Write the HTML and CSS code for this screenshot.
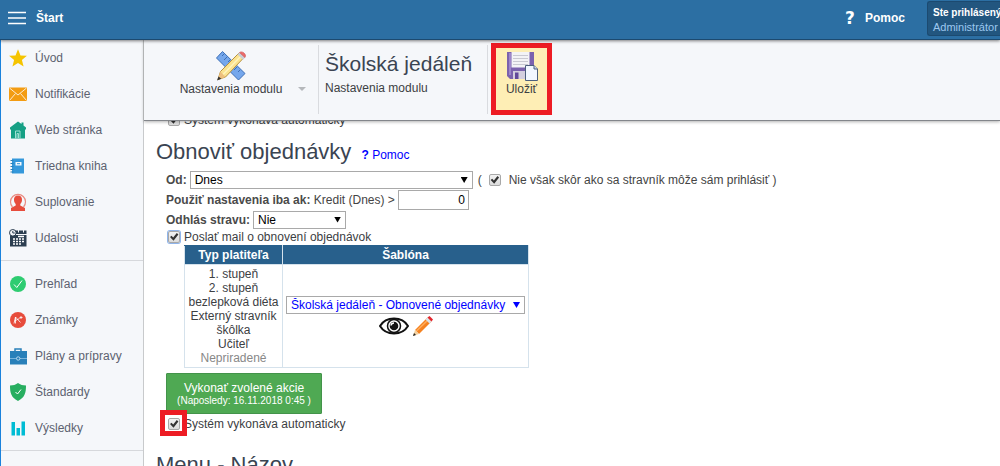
FILE: index.html
```html
<!DOCTYPE html>
<html lang="sk">
<head>
<meta charset="utf-8">
<title>Školská jedáleň</title>
<link rel="stylesheet" href="styles.css">
</head>
<body>
<header class="topbar">
  <button class="menu-button" type="button">
    <svg width="18" height="14" viewBox="0 0 18 14"><path d="M0 1.500h18M0 7h18M0 12.500h18" stroke="#fff" stroke-width="1.600"/></svg>
    Štart
  </button>
  <a class="help" href="#"><span class="help-mark">?</span>Pomoc</a>
  <div class="user"><strong>Ste prihlásený</strong><span>Administrátor</span></div>
</header>
<div class="shell">
  <nav class="sidebar">
    <div class="nav-group">
      <a class="nav-item" href="#"><svg class="nav-icon" viewBox="0 0 18 18"><path d="M9 .3l2.500 6.100 6.400.4-5 4.200 1.700 6.500L9 14l-5.600 3.500 1.700-6.500-5-4.200 6.400-.4z" fill="#f5c400"/></svg>Úvod</a>
      <a class="nav-item" href="#"><svg class="nav-icon" viewBox="0 0 18 18"><path d="M0 2.500h18v13.500H0z" fill="#f39c12"/><path d="M.5 3l8.500 7 8.500-7M.5 15.500l6-7M17.500 15.500l-6-7" fill="none" stroke="#fdebd0"/></svg>Notifikácie</a>
      <a class="nav-item" href="#"><svg class="nav-icon" viewBox="0 0 18 18"><path d="M9 .5L1 6.500v2h1V17.500h14V8.500h1v-2L14.500 4.500V1.500h-2v1.500z" fill="#16a085"/><path d="M6.500 17.500V10h4.500v7.500M8 17v-4.500h1.500V17" fill="none" stroke="#9fe0d2"/></svg>Web stránka</a>
      <a class="nav-item" href="#"><svg class="nav-icon" viewBox="0 0 18 18"><path d="M3 1.500h12v15H3z" fill="#3498db"/><path d="M1.500 3.500h3M1.500 6.500h3M1.500 9.500h3M1.500 12.500h3M1.500 15h3" stroke="#2980b9"/><path d="M6.500 5h6v3.500h-6z" fill="#f4f9fd"/><path d="M8 6.700h3" stroke="#3498db"/></svg>Triedna kniha</a>
      <a class="nav-item" href="#"><svg class="nav-icon" viewBox="0 0 18 18"><path d="M3.500 14a7.500 7.500 0 1 1 11 0" fill="none" stroke="#e98b82" stroke-width="1.200"/><path d="M9 2.500c-2.800 0-4.200 1.800-4 4.500 0 1.800.8 3 1.700 4v1.500L2 15v3h14v-3l-4.700-2.500V11c.9-1 1.700-2.200 1.700-4 .2-2.700-1.200-4.500-4-4.500z" fill="#e74c3c"/></svg>Suplovanie</a>
      <a class="nav-item" href="#"><svg class="nav-icon" viewBox="0 0 18 18"><path d="M5 1.500h12.500V5H5zM1 6h16.500v11.500H1z" fill="#2c3e50"/><path d="M9.500 0v3.500M14.500 0v3.500" stroke="#f5f7fa"/><circle cx="3.800" cy="3.800" r="3.300" fill="#f5f7fa" stroke="#2c3e50"/><path d="M3.800 2v2h2" fill="none" stroke="#2c3e50"/><path d="M4 10h2M7 10h2M10 10h2M13 10h2M4 12.500h2M7 12.500h2M10 12.500h2M13 12.500h2M4 15h2M7 15h2M10 15h2M9 7.500h6" stroke="#fff" stroke-width="1.500"/></svg>Udalosti</a>
    </div>
    <div class="nav-group">
      <a class="nav-item" href="#"><svg class="nav-icon" viewBox="0 0 18 18"><circle cx="9" cy="9" r="8" fill="#2ecc71"/><path d="M5 9.500l2.800 3L13 5.500" fill="none" stroke="#fff"/></svg>Prehľad</a>
      <a class="nav-item" href="#"><svg class="nav-icon" viewBox="0 0 18 18"><circle cx="9" cy="9" r="8" fill="#e74c3c"/><path d="M5 12.500L6.500 6l5 5.500M5.500 10l5-2.500M6.500 12.500V6M10.500 6.500h3M12 5v3" fill="none" stroke="#fff" stroke-width=".8"/></svg>Známky</a>
      <a class="nav-item" href="#"><svg class="nav-icon" viewBox="0 0 18 18"><path d="M1 4h17v13.500H1z" fill="#2980b9"/><path d="M6 4V2h6v2" fill="none" stroke="#2980b9" stroke-width="1.500"/><path d="M1 11.500h6.500M11 11.500h7" stroke="#8fc1e3" stroke-width=".8"/><circle cx="9.200" cy="11.500" r="1.700" fill="#2980b9" stroke="#d6e9f6" stroke-width=".8"/></svg>Plány a prípravy</a>
      <a class="nav-item" href="#"><svg class="nav-icon" viewBox="0 0 18 18"><path d="M9 0c2 1.700 5 2.500 8 2.500 0 7-1 12-8 15.500C2 14.500 1 9.500 1 2.500 4 2.500 7 1.700 9 0z" fill="#27ae60"/><path d="M6.500 9l2 2L12 6.500" fill="none" stroke="#fff"/></svg>Štandardy</a>
      <a class="nav-item" href="#"><svg class="nav-icon" viewBox="0 0 18 18"><path d="M2.500 3h3.500v13.500H2.500zM7.500 9h3.500v7.500H7.500zM12.500 2.500H16v14h-3.500z" fill="#00bcd4"/></svg>Výsledky</a>
    </div>
  </nav>
  <main class="main">
    <div class="toolbar">
      <button class="tool settings" type="button">
        <svg class="tool-icon" viewBox="0 0 32 32"><path d="M7.500 1.500L1.500 8l22 22 6.500-6.500z" fill="#75a7ec" stroke="#3d6fb6"/><path d="M9 4l-2 2M12 7l-3 3M15 10l-2 2M19 14l-2 2M22 17l-3 3M25 20l-2 2" stroke="#3d6fb6"/><path d="M3 29.500l2.500-8L24 3l5 4.500L10.500 27z" fill="#fbe38f" stroke="#b7913e"/><path d="M8 24.500L26.500 5.500" stroke="#fff3bd" stroke-width="1.500"/><path d="M22.500 4.500l2-2L30 7.800l-2 2z" fill="#c9ced6"/><path d="M24.500 2.500C27 .5 32 4 30 7.500z" fill="#ed6b6b" stroke="#c84a4a" stroke-width=".6"/><path d="M5.500 21.500l-3 8.500 8-3z" fill="#eec07e"/><path d="M3.500 26.500L2 30.500l4.300-1.700z" fill="#333"/></svg>
        <span>Nastavenia modulu</span>
        <svg class="tool-arrow" viewBox="0 0 8 4"><path d="M0 0h8L4 4z" fill="#b5b8bb"/></svg>
      </button>
      <div class="module">
        <h1>Školská jedáleň</h1>
        <p>Nastavenia modulu</p>
      </div>
      <button class="tool save" type="button">
        <svg class="tool-icon" viewBox="0 0 32 32"><path d="M1 2h27v27H4l-3-3z" fill="#7b62ae"/><path d="M3 3h2v22H3z" fill="#9d86ca"/><path d="M5.500 2h18v15.500h-18z" fill="#f3f3f6"/><path d="M7 5.500h15M7 8.500h15M7 11.500h15M7 14.500h15" stroke="#c9c9d2"/><path d="M7 21h13v8H7z" fill="#d4cfdf"/><path d="M9 22.500h3.500V29H9z" fill="#62499a"/><path d="M19.500 15.500H28l3.500 3.500v11.500h-12z" fill="#f2f7ff" stroke="#4c5f7e"/><path d="M28 15.500V19h3.500" fill="#c9daf2" stroke="#4c5f7e"/></svg>
        <span>Uložiť</span>
      </button>
    </div>
    <form class="content">
      <label class="check-row"><input class="check" type="checkbox" checked>Systém vykonáva automaticky</label>
      <h2>Obnoviť objednávky <a class="inline-help" href="#"><b>?</b> Pomoc</a></h2>
      <div class="row">
        <label class="name" for="from">Od:</label>
        <span class="select select-from"><select id="from"><option>Dnes</option></select></span>
        <span class="paren">(</span>
        <label class="limit"><input class="check" type="checkbox" checked>Nie však skôr ako sa stravník môže sám prihlásiť )</label>
      </div>
      <div class="row">
        <label for="credit"><b>Použiť nastavenia iba ak:</b> Kredit (Dnes) &gt;</label>
        <input class="credit" id="credit" type="text" value="0">
      </div>
      <div class="row row-cancel">
        <label class="name" for="cancel">Odhlás stravu:</label>
        <span class="select select-cancel"><select id="cancel"><option>Nie</option></select></span>
      </div>
      <label class="check-row mail-row"><input class="check focused" type="checkbox" checked>Poslať mail o obnovení objednávok</label>
      <table class="templates">
        <thead><tr><th class="col-type">Typ platiteľa</th><th class="col-template">Šablóna</th></tr></thead>
        <tbody><tr>
          <td>1. stupeň<br>2. stupeň<br>bezlepková diéta<br>Externý stravník<br>škôlka<br>Učiteľ<br><span class="muted">Nepriradené</span></td>
          <td>
            <span class="select select-template"><select aria-label="Šablóna"><option>Školská jedáleň - Obnovené objednávky</option></select></span>
            <div class="actions">
              <button type="button" aria-label="Zobraziť"><svg width="30" height="20" viewBox="0 0 30 20"><path d="M1 10C7 0 23 0 29 10 23 20 7 20 1 10z" fill="#fff" stroke="#111" stroke-width="2"/><circle cx="15" cy="10" r="6.500" fill="#fff" stroke="#111" stroke-width="1.500"/><circle cx="15" cy="10" r="4.300" fill="#111"/><path d="M12 9.500a3 3 0 0 1 3-2.500" fill="none" stroke="#fff" stroke-width="1.500"/></svg></button>
              <button type="button" aria-label="Upraviť"><svg width="20" height="20" viewBox="0 0 20 20"><path d="M2 14L14.500 1.500l4 4L6 18z" fill="#f58220"/><path d="M3.500 15L16 3" stroke="#ffad5c" stroke-width="1.500"/><path d="M12.500 3.500l2-2 4 4-2 2z" fill="#d9e2ea"/><path d="M14.500 1.500L16.500 0 20 3.500l-1.500 2z" fill="#e3262e"/><path d="M2 14l-2 6 6-2z" fill="#f3d1a0"/><path d="M1 17l-1 3 3-1z" fill="#222"/></svg></button>
            </div>
          </td>
        </tr></tbody>
      </table>
      <button class="run" type="button">Vykonať zvolené akcie<small>(Naposledy: 16.11.2018 0:45 )</small></button>
      <label class="check-row highlighted"><input class="check" type="checkbox" checked>Systém vykonáva automaticky</label>
      <h2 class="next-title">Menu - Názov</h2>
    </form>
  </main>
</div>
</body>
</html>
```
FILE: styles.css
```css
*, *::before, *::after { box-sizing: border-box; }
body {
  margin: 0;
  height: 100vh;
  display: flex;
  flex-direction: column;
  overflow: hidden;
  font: 12px/14px "Liberation Sans", Arial, sans-serif;
  color: #3c4043;
  background: #fff;
}
button, input, select { font: inherit; color: inherit; }
button { border: 0; padding: 0; background: none; cursor: pointer; }
a { text-decoration: none; }

.topbar {
  position: relative;
  z-index: 3;
  flex: none;
  height: 40px;
  display: flex;
  align-items: center;
  padding-left: 8px;
  background: #2c6fa3;
  border-bottom: 1px solid #1c4a70;
  box-shadow: 0 1px 3px rgba(0, 0, 0, .5);
  color: #fff;
  white-space: nowrap;
}
.menu-button { display: flex; align-items: center; gap: 10px; font-weight: bold; padding-bottom: 4px; }
.help { display: flex; align-items: center; gap: 10px; margin-left: auto; padding-bottom: 4px; color: #fff; font-weight: bold; }
.help-mark { font: bold 17px/18px "DejaVu Sans", sans-serif; }
.user {
  align-self: flex-start;
  width: 73px;
  height: 35px;
  margin: 1px 0 0 22px;
  padding: 4px 0 4px 5px;
  display: flex;
  flex-direction: column;
  font-size: 11px;
  background: #22567f;
  border: 1px solid #1c4a70;
  border-right: 0;
  border-radius: 3px 0 0 3px;
}
.user strong { font-size: 10px; }
.user span { color: #9cc8f0; }

.shell { flex: 1; min-height: 0; display: flex; border-left: 1px solid #1a82dc; }
.sidebar { flex: none; width: 143px; background: #f5f7fa; border-right: 1px solid #c8cacc; }
.nav-group { padding-bottom: 4px; border-bottom: 1px solid #d6d8dc; }
.nav-group + .nav-group { padding-top: 5px; }
.nav-item { height: 36px; display: flex; align-items: center; gap: 8px; padding-left: 8px; color: #5c6270; }
.nav-icon { width: 18px; height: 18px; }

.main { flex: 1; min-width: 0; }
.toolbar {
  position: relative;
  z-index: 2;
  height: 81px;
  display: flex;
  padding: 3px 0 5px;
  background: #f5f7fa;
  border-bottom: 1px solid #83868b;
  box-shadow: 0 1px 3px rgba(0, 0, 0, .3);
}
.tool { display: flex; flex-direction: column; align-items: center; }
.tool-icon { width: 32px; height: 32px; }
.settings { position: relative; width: 174px; padding: 7px 0 0; }
.tool-arrow { position: absolute; right: 12px; top: 44px; width: 8px; height: 4px; }
.module { width: 170px; margin: 2px 3px 1px 0; padding: 7px 0 0 6px; border: solid #d9dbdf; border-width: 0 1px; }
.module h1 { margin: 0 0 5px; font-size: 21px; line-height: 24px; font-weight: normal; color: #3a4452; white-space: nowrap; }
.module p { margin: 0; }
.save { width: 61px; height: 72px; padding-top: 2px; border: 5px solid #ed1c24; background: #feeeb5; }

.content { padding-left: 12px; margin-top: -8px; }
.check-row, .row { display: flex; align-items: center; margin-left: 10px; }
.check-row { height: 14px; gap: 4px; padding-left: 2px; width: max-content; }
.check {
  appearance: none;
  flex: none;
  width: 12px;
  height: 12px;
  margin: 0;
  border: 1px solid #a8a8a8;
  border-radius: 2px;
  background: linear-gradient(#f2f2f2, #dcdcdc);
}
.check:checked::before {
  content: "";
  display: block;
  height: 10px;
  background: #333;
  clip-path: polygon(10% 50%, 25% 38%, 42% 55%, 78% 10%, 94% 25%, 45% 88%);
}
.focused { box-shadow: 0 0 0 1px #8fb4ea; }
h2 { margin: 13px 0 3px; font-size: 22px; line-height: 24px; font-weight: normal; color: #3a4452; }
.inline-help { margin-left: 4px; font-size: 12px; color: #00f; }
.row { height: 20px; gap: 3px; color: #444; }
.row-cancel { height: 19px; }
.mail-row { margin-top: 1px; }
.name, .row b { font-weight: bold; color: #4a4a4a; }
.paren { margin-left: 2px; }
.limit { display: flex; align-items: center; gap: 8px; margin-left: 4px; }
.select { position: relative; display: inline-block; color: #000; }
.select::after {
  content: "";
  position: absolute;
  right: 5px;
  top: 6px;
  width: 7px;
  height: 6px;
  background: currentColor;
  clip-path: polygon(0 0, 100% 0, 50% 100%);
  pointer-events: none;
}
.select select {
  appearance: none;
  display: block;
  width: 100%;
  height: 18px;
  padding: 0 4px;
  border: 1px solid #a9a9a9;
  border-radius: 0;
  background: #fff;
}
.select-from { width: 283px; }
.select-cancel { width: 93px; }
.select-template { width: 239px; color: #00f; }
.credit { width: 71px; height: 20px; padding: 0 3px; border: 1px solid #a9a9a9; text-align: right; color: #000; }

.templates { width: 345px; margin: 1px 0 0 28px; border-collapse: collapse; text-align: center; }
.templates th { height: 19px; padding: 0; background: #28608c; color: #fff; border: 1px solid #d5e2ec; border-top-color: #28608c; }
.templates td { padding: 2px 3px; border: 1px solid #d5e2ec; }
.col-type { width: 98px; }
.muted { color: #888; }
.actions { display: flex; justify-content: center; gap: 4px; padding-top: 2px; }
.actions button, .actions svg { display: block; }
.run {
  display: block;
  width: 156px;
  height: 41px;
  margin: 5px 0 3px 10px;
  background: #4fa953;
  border: 1px solid #43934a;
  border-radius: 1px;
  color: #fff;
}
.run small { display: block; font-size: 10px; line-height: 12px; }
.highlighted { position: relative; }
.highlighted::after {
  content: "";
  position: absolute;
  left: -6px;
  top: -7px;
  width: 27px;
  height: 26px;
  border: 5px solid #ed1c24;
}
.next-title { margin-top: 22px; white-space: nowrap; }
```
